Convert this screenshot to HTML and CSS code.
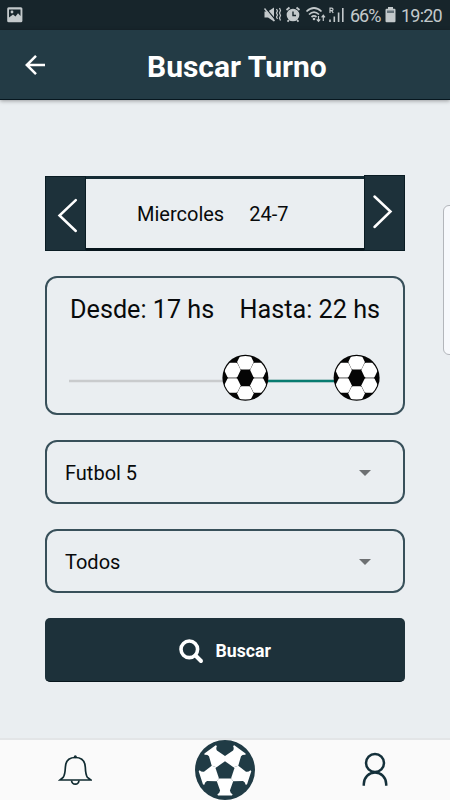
FILE: index.html
```html
<!DOCTYPE html>
<html lang="es">
<head>
<meta charset="utf-8">
<title>Buscar Turno</title>
<link rel="stylesheet" href="styles.css">
</head>
<body>
<svg class="defs" width="0" height="0" aria-hidden="true">
  <defs>
    <path id="hex" d="M-8.300 0L-5-6.800L-3.800-7.300H3.800L5-6.800L8.300 0L5 6.800L3.800 7.300H-3.800L-5 6.800Z"/>
    <path id="arm" d="M0 0L-8.2 11.3L-4.9 20.5Q-5.2 23-7.6 24.2L-7 25.4H7L7.6 24.2Q5.2 23 4.9 20.5L8.2 11.3Z"/>
    <clipPath id="rim"><circle r="21.800"/></clipPath>
    <g id="ball">
      <circle r="23" fill="#050505"/>
      <g fill="#fff" clip-path="url(#rim)">
        <use href="#hex" y="-15.7"/><use href="#hex" y="15.7"/>
        <use href="#hex" x="-13" y="-7.7"/><use href="#hex" x="13" y="-7.7"/>
        <use href="#hex" x="-13" y="7.7"/><use href="#hex" x="13" y="7.7"/>
      </g>
      <path d="M-17.5 0H-9M9 0H17.5" stroke="#aaa" stroke-width="1.200"/>
    </g>
  </defs>
</svg>
<div class="screen">
  <div class="status">
    <svg class="picture" width="16" height="16" viewBox="0 0 16 16"><rect x=".2" y=".2" width="15.2" height="15" rx="1.5" fill="#c3c9cb"/><path d="M2 2.5H13.5V9L11 6.3L8.5 9.5L6 7.5L2 10.5Z" fill="#17252b"/><circle cx="5" cy="5" r="1.4" fill="#c3c9cb"/></svg>
    <svg class="signals" width="82" height="18" viewBox="264 6 82 18" fill="none" stroke="#c3c9cb">
      <path d="M265.500 11.500H269L275 7.500V21.500L269 17.500H265.500Z" fill="#c3c9cb" stroke="none"/>
      <path d="M267 8.500L276.500 20" stroke="#17252b" stroke-width="1.200"/>
      <path d="M265.500 8.500L275.500 21" stroke-width="1.400"/>
      <path d="M277.500 9L278.500 11L277.500 13L278.500 15L277.500 17L278.500 19M280.500 8L281.500 10.500L280.500 13L281.500 15.500L280.500 18L281.500 20.500" stroke-width="1.200"/>
      <circle cx="294" cy="15" r="5.600" fill="#c3c9cb" stroke-width="1.500"/>
      <path d="M287.500 10L290.500 7.500M300.500 10L297.500 7.500M290 20L288.500 21.700M298 20L299.500 21.700" stroke-width="1.800"/>
      <path d="M294 11.500V15.500H297" stroke="#17252b" stroke-width="1.400"/>
      <path d="M307.500 11.500Q315 4.500 322.500 11.500M310 14.500Q315 9.700 320 14.500M312.500 17Q315 14.800 317.500 17" stroke-width="1.700"/>
      <circle cx="315" cy="19" r="1.300" fill="#c3c9cb" stroke="none"/>
      <path d="M319.500 16V21M317.800 19.300L319.500 21.300L321.200 19.300M324.300 21V15.500M322.600 17.300L324.300 15.300L326 17.300" stroke-width="1.200"/>
      <path d="M331 13V8.200H332.700Q334 8.300 334 9.400T332.700 10.600H331M332.700 10.600L334.200 13" stroke-width="1.200"/>
      <path d="M331 22V19.500M335.300 22V16.500M339.600 22V12.500M343.800 22V8" stroke-width="1.600"/>
    </svg>
    <span class="percent">66%</span>
    <svg class="battery" width="11" height="16" viewBox="0 0 11 16" fill="#c3c9cb"><path d="M3 0H8V1.800H9.500Q10.500 1.800 10.500 3V14Q10.500 15.200 9.500 15.200H1.500Q.5 15.200.5 14V3Q.5 1.800 1.500 1.800H3Z"/><rect x="2" y="3.500" width="7" height="2.500" fill="#66737a"/></svg>
    <span class="clock">19:20</span>
  </div>
  <header class="header">
    <svg class="back" width="22" height="22" viewBox="0 0 22 22" fill="none" stroke="#fff" stroke-width="2.500"><path d="M21 11H3M12 1.800L2.800 11L12 20.200"/></svg>
    <h1 class="title">Buscar Turno</h1>
  </header>
  <main class="main">
    <div class="date">
      <button class="arrow prev" aria-label="Anterior"><svg width="41" height="75" viewBox="0 0 41 75"><path d="M30.800 24.200L14.500 39.500L30.800 55"/></svg></button>
      <div class="day"><span class="weekday">Miercoles</span><span class="monthday">24-7</span></div>
      <button class="arrow next" aria-label="Siguiente"><svg width="41" height="76" viewBox="0 0 41 76"><path d="M10.500 21.500L26.500 36.500L10.500 52"/></svg></button>
    </div>
    <section class="range">
      <div class="hours"><span class="from">Desde: 17 hs</span><span class="to">Hasta: 22 hs</span></div>
      <svg class="slider" width="314" height="48" viewBox="69 354 314 48">
        <path d="M69 381H380" stroke="#c9cbcd" stroke-width="2.300"/>
        <path d="M245 381H356" stroke="#087b70" stroke-width="2.400"/>
        <use href="#ball" x="245.400" y="377.800"/>
        <use href="#ball" x="356.600" y="377.800"/>
      </svg>
    </section>
    <div class="select"><span class="futbol">Futbol 5</span><i class="caret"></i></div>
    <div class="select"><span class="todos">Todos</span><i class="caret"></i></div>
    <button class="search">
      <svg width="25" height="25" viewBox="0 0 25 25" fill="none" stroke="#fff"><circle cx="10.300" cy="10.300" r="8.300" stroke-width="3.600"/><path d="M16.500 16.500L22 22" stroke-width="4" stroke-linecap="round"/></svg>
      <span class="label">Buscar</span>
    </button>
  </main>
  <nav class="tabs">
    <a class="tab"><svg width="34" height="34" viewBox="58 752 34 34" fill="none" stroke="#102b31" stroke-width="1.700"><path d="M60 779H91L87.500 776.500Q85.600 774 85.300 766Q84.800 756.500 75.300 756.500T65.400 766Q65 774 63.100 776.500Z"/><path d="M71.500 779.500Q72 783.200 75.300 783.200T79 779.500"/><circle cx="75.300" cy="755.700" r=".7"/></svg></a>
    <a class="tab"><svg width="60" height="60" viewBox="-30 -30 60 60"><circle r="30" fill="#203b45"/><g fill="#fff"><use href="#arm"/><use href="#arm" transform="rotate(72)"/><use href="#arm" transform="rotate(144)"/><use href="#arm" transform="rotate(216)"/><use href="#arm" transform="rotate(288)"/></g><path d="M0-8.800L9.500-2L6 8.500H-6L-9.500-2Z" fill="#203b45"/></svg></a>
    <a class="tab"><svg width="30" height="36" viewBox="360 752 30 36" fill="none" stroke="#14303a" stroke-width="2.500"><circle cx="375" cy="763" r="9"/><path d="M363.800 785.800V784A11.200 11.500 0 0 1 386.200 784V785.800"/></svg></a>
  </nav>
  <div class="edge"></div>
</div>
</body>
</html>
```

FILE: styles.css
```css
* { box-sizing: border-box; }
body { margin: 0; font-family: Roboto, "Liberation Sans", sans-serif; color: #080a0b; }
svg { display: block; flex: none; }
button { border: 0; padding: 0; font: inherit; }
span { white-space: nowrap; }
.defs { position: absolute; }
.screen { position: relative; width: 450px; height: 800px; overflow: hidden; display: flex; flex-direction: column; background: #eaeef1; }

.status { height: 30px; flex: none; display: flex; align-items: center; padding: 0 8px 0 7px; background: #17252b; color: #c3c9cb; font-size: 18px; }
.signals { margin-left: auto; }
.percent { margin-left: 5px; width: 30px; letter-spacing: -1px; }
.battery { margin-left: 5px; }
.clock { margin-left: 5px; width: 41px; letter-spacing: -.8px; }

.header { height: 70px; flex: none; display: flex; align-items: center; padding-left: 24px; background: #233b45; border-bottom: 1px solid #07171f; box-shadow: 0 1px 4px rgba(0, 0, 0, .35); color: #fff; z-index: 1; }
.title { margin: 4px 0 0 101px; font-size: 30px; line-height: 36px; font-weight: 700; white-space: nowrap; }

.main { flex: 1; display: flex; flex-direction: column; padding: 75px 45px 0; }
.date { height: 76px; display: flex; align-items: flex-end; }
.arrow { width: 41px; background: #1d313a; box-shadow: inset 0 0 0 1px #0a1c24; }
.arrow path { fill: none; stroke: #fff; stroke-width: 2.5; stroke-linecap: round; }
.prev { height: 75px; }
.next { height: 76px; }
.day { flex: 1; height: 75px; display: flex; align-items: center; padding: 0 0 0 51px; border-top: 3px solid #152c35; border-bottom: 3px solid #07151c; font-size: 20px; }
.monthday { margin-left: 25px; }

.range { height: 139px; margin-top: 25px; border: 2px solid #38505a; border-radius: 12px; padding: 17px 22px 0; }
.hours { display: flex; justify-content: space-between; padding: 0 1px; font-size: 25.2px; line-height: 30px; }
.slider { margin-top: 29px; }

.select { height: 64px; margin-top: 25px; display: flex; align-items: center; justify-content: space-between; padding: 2px 32px 0 18px; border: 2px solid #38505a; border-radius: 12px; font-size: 20px; }
.caret { border: 6px solid transparent; border-top-color: #6d7072; border-bottom: 0; }

.search { height: 64px; margin-top: 25px; display: flex; align-items: center; padding: 3px 0 0 134px; border-radius: 5px; border-bottom: 1px solid #07151c; background: #1d313a; color: #fff; font-size: 17.7px; font-weight: 700; }
.label { margin-left: 11.5px; }

.tabs { height: 62px; flex: none; display: grid; grid-template-columns: repeat(3, 1fr); align-items: center; justify-items: center; background: #fafafa; border-top: 2px solid #e3e5e7; }

.edge { position: absolute; left: 443px; top: 205px; width: 16px; height: 150px; border: 1px solid #b3b6bb; border-radius: 6px; background: #f7f9fc; }
```
